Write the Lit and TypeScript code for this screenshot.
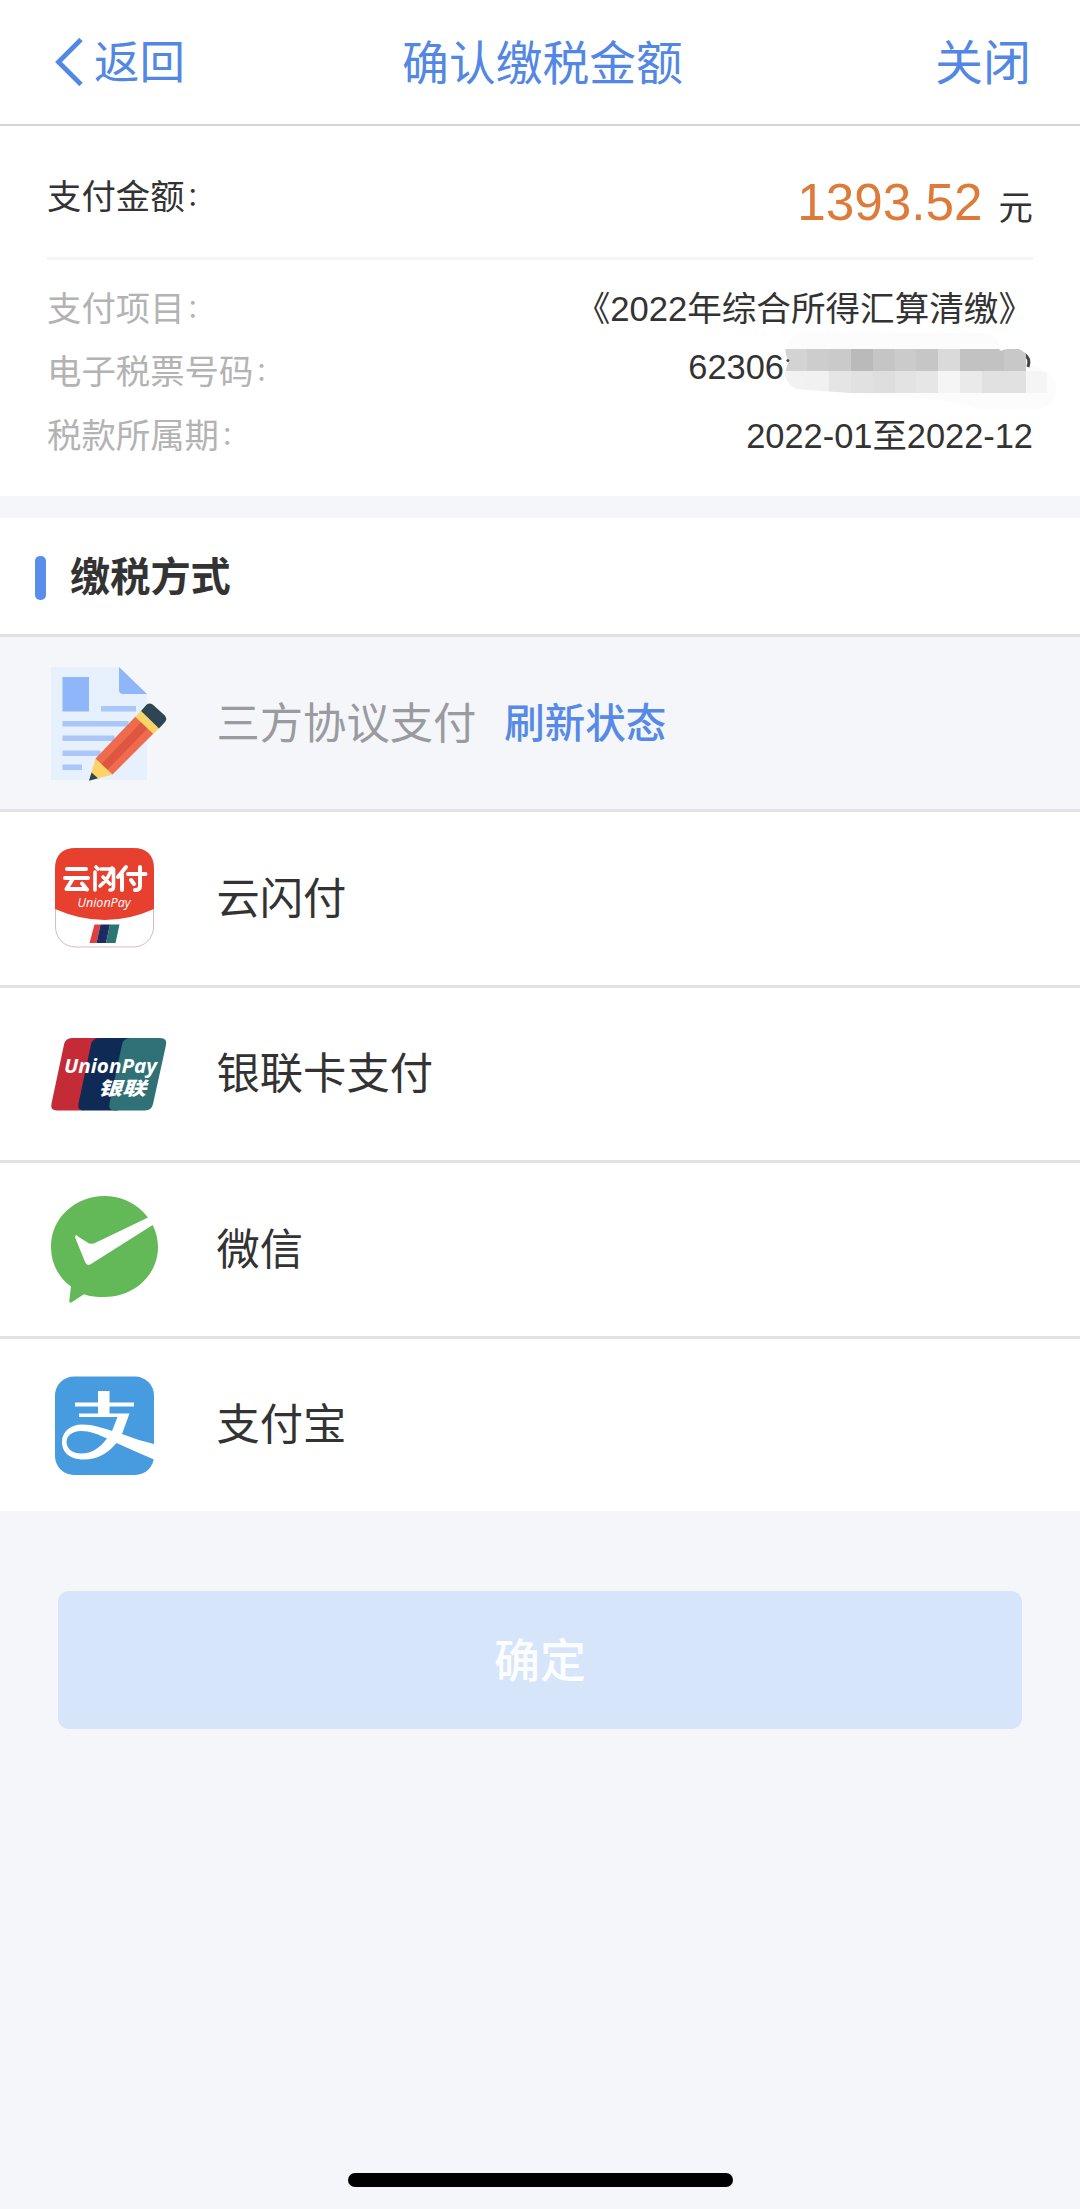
import { LitElement, html, css, svg } from "lit";
import { customElement } from "lit/decorators.js";

const documentIcon = html`<svg viewBox="30 643 160 160">
  <path d="M51 667H119L147 694V780H51Z" fill="#e6f1fd"/>
  <path d="M119 667L147 694H123Q119 694 119 690Z" fill="#8fb6f9"/>
  <rect x="62.500" y="677" width="26.500" height="34.500" fill="#8fb6f9"/>
  <g fill="#abc6f8">
    <rect x="101" y="706" width="35" height="5.500"/>
    <rect x="62.500" y="721" width="66" height="5.500"/>
    <rect x="62.500" y="735.500" width="52" height="5.500"/>
    <rect x="62.500" y="750.500" width="38" height="5.500"/>
    <rect x="62.500" y="764.500" width="19.500" height="5.500"/>
  </g>
  <path d="M95.500 758.500L89 780.700L112.500 774.500Z" fill="#fbd467"/>
  <path d="M91.500 772.500L89 780.700L98 778.200Z" fill="#2f4552"/>
  <path d="M135.500 716.500L95.500 758.500L112.500 774.500L153.500 733.500Z" fill="#ee6c4d"/>
  <path d="M141.500 722L101.500 764L107.500 769.500L147.500 728.500Z" fill="#dd5641"/>
  <path d="M140.500 711L135.500 717L153.500 734L159 728.500Z" fill="#fbd467"/>
  <path d="M141 711L146.500 704.800Q149.500 702 153 704.800L164.500 715.300Q167.800 718.800 165 722L159 728.500Z" fill="#2f4552"/>
</svg>`;

const quickPassIcon = html`<svg viewBox="30 830 160 140">
  <rect x="55.500" y="849.500" width="98" height="98.500" rx="20" fill="#fff" stroke="#d9b9c2" stroke-width="1"/>
  <path d="M55 910V870Q55 849 76 849H133Q154 849 154 870V910Q105 932 55 910Z" fill="#e8402f"/>
  <g fill="none" stroke="#fff" stroke-width="4" stroke-linecap="round" stroke-linejoin="round">
    <path d="M67 870H86M65 879H88M73 879.500L66.500 890H86M82 884.500L87 890.500"/>
    <path d="M95 873V891M96 868L98 870M101 870H113.500V888Q113.500 891 110 891M112 869Q108 881 100 887M103 878L110 885" stroke-width="3.600"/>
    <path d="M126 868L118 878M122 876V891M128 875H145.500M140 868V887Q140 891 135 891M131 881L134 885"/>
  </g>
  <text x="104" y="907.500" text-anchor="middle" textLength="53" lengthAdjust="spacingAndGlyphs" font-family="Open Sans, sans-serif" font-size="13.500" font-style="italic" font-weight="500" fill="#fff">UnionPay</text>
  <path d="M94.500 925.500H100.500L96.500 944H89.500Z" fill="#e2403f"/>
  <path d="M100.500 925.500H110L106 944H96.500Z" fill="#1c2c63"/>
  <path d="M110 925.500H119.500L115.500 944H106Z" fill="#2b7672"/>
</svg>`;

const unionPayIcon = html`<svg viewBox="30 1020 160 110">
  <path d="M72 1039H100L84 1111.500H57Q50 1111.500 51.500 1104.500L64 1045.500Q65.500 1039 72 1039Z" fill="#c52b36"/>
  <path d="M99 1039H134L118 1111.500H84Q77 1111.500 78.500 1104.500L91 1045.500Q92.500 1039 99 1039Z" fill="#0f2a55"/>
  <path d="M130 1039H160Q167.500 1039 166 1046L153 1105Q151.500 1111.500 145 1111.500H115Q108 1111.500 109.500 1104.500L122 1045.500Q123.500 1039 130 1039Z" fill="#2f7176"/>
  <text x="64" y="1074" textLength="93" lengthAdjust="spacingAndGlyphs" font-family="Open Sans, sans-serif" font-size="20" font-style="italic" font-weight="700" fill="#fff">UnionPay</text>
  <text x="98" y="1096" textLength="48" lengthAdjust="spacingAndGlyphs" font-family="Noto Sans CJK SC, sans-serif" font-size="18.500" font-style="italic" font-weight="900" fill="#fff">银联</text>
</svg>`;

const wechatIcon = html`<svg viewBox="30 1180 160 140">
  <path d="M71 1287.500C58 1278 51 1264 51 1248C51 1219 75 1197 104.500 1197C134 1197 158 1220 158 1248C158 1276 134 1298 104.500 1298C97 1298 90 1297.500 84 1295.200L72 1303Q69 1305 69.300 1301.500Z" fill="#63b857"/>
  <path d="M76 1236.200L87.500 1243.500Q91 1246 96 1243.500L147 1219L156 1223L153.500 1225.500L91 1265Q87 1267.500 85.300 1263.500L75.300 1239Q74.500 1235.500 78 1236.500Z" fill="#fff"/>
  <path d="M147 1219L150 1217L162 1217V1224L153.500 1225.500Z" fill="#fff"/>
</svg>`;

const alipayIcon = html`<svg viewBox="30 1360 160 130">
  <rect x="55" y="1376.500" width="99" height="98.500" rx="19" fill="#479bdf"/>
  <path fill="#fff" d="M98 1391H109.500V1402.500H134V1406.500H109.500V1413.500H129.500L122 1434Q137 1440 154 1444V1459.500Q134 1451 116.500 1443Q103 1459.500 84 1459.500C68 1459.500 62 1451 62 1442C62 1431 71 1424.500 82 1424.500C93 1424.500 103 1428 112 1431L117.500 1417H79V1413.500H98V1406.500H75V1402.500H98Z"/>
  <path d="M107 1438.500C98 1434.500 90 1431 81 1431C72 1431 66.500 1436 66.500 1442C66.500 1449 73 1453.500 81 1453.500C92 1453.500 100 1447.500 107 1438.500Z" fill="#479bdf"/>
</svg>`;

const upper = ["#d3d3d3", "#cdcdcd", "#cacaca", "#bababa", "#c5c5c5", "#cbcbcb", "#c6c6c6", "#dadada", "#c2c2c2", "#c2c2c2", "#c8c8c8"];
const lower = ["#f2f2f2", "#f1f1f1", "#e5e5e5", "#e1e1e1", "#dedede", "#e3e3e3", "#e6e6e6", "#f5f5f5", "#eaeaea", "#e1e1e1", "#e1e1e1", "#f5f5f5"];

const methods = [
  { name: "云闪付", icon: quickPassIcon },
  { name: "银联卡支付", icon: unionPayIcon },
  { name: "微信", icon: wechatIcon },
  { name: "支付宝", icon: alipayIcon },
];

@customElement("app-root")
export class AppRoot extends LitElement {
  static styles = css`
    :host {
      display: flex;
      flex-direction: column;
      box-sizing: border-box;
      width: 1080px;
      height: 2209px;
      overflow: hidden;
      background: #f4f6fa;
      color: #333;
      font-family: "Liberation Sans", "Noto Sans CJK SC", sans-serif;
      font-size: 34.4px;
      line-height: 1;
    }
    .header {
      flex: none;
      box-sizing: border-box;
      display: grid;
      grid-template-columns: 1fr auto 1fr;
      align-items: center;
      height: 126px;
      padding: 4px 49px 0 54px;
      border-bottom: 2px solid #d4d4d6;
      background: #fff;
      color: #5387e4;
      font-size: 46.8px;
    }
    .back { display: flex; align-items: center; gap: 11px; font-size: 45.5px; }
    .back svg { width: 29px; height: 48px; margin-top: -4px; }
    .close { justify-self: end; font-size: 48px; }
    .summary {
      flex: none;
      box-sizing: border-box;
      height: 370px;
      padding: 0 47px;
      background: #fff;
    }
    .amount {
      display: flex;
      justify-content: space-between;
      box-sizing: border-box;
      height: 134px;
      padding-top: 53px;
      border-bottom: 3px solid #f5f5f6;
    }
    .label { line-height: 36px; }
    .value { display: flex; align-items: baseline; gap: 16px; line-height: 48px; }
    .sum { color: #dd7b3b; font-size: 51.3px; }
    .colon { position: relative; top: -4px; margin-left: 2px; font-size: 25px; }
    .details { display: grid; padding-top: 18px; }
    .line { display: flex; justify-content: space-between; height: 63.4px; line-height: 63.4px; }
    .line .label { color: #b3b3b3; line-height: inherit; }
    .project { font-size: 34.6px; }
    .number { display: flex; line-height: 52px; }
    .mosaic { width: 265px; height: 53.2px; margin: 1px -16px 0 0; overflow: visible; }
    .methods { flex: none; margin-top: 22px; background: #fff; }
    .heading {
      box-sizing: border-box;
      display: flex;
      align-items: center;
      gap: 24px;
      height: 119px;
      padding: 3px 35px 0;
      border-bottom: 3px solid #e1e2e5;
      font-size: 40.2px;
      font-weight: 700;
    }
    .heading span { padding-top: 1px; }
    .mark { width: 11px; height: 44px; border-radius: 5px; background: #5a8eea; }
    .method {
      box-sizing: border-box;
      display: flex;
      align-items: center;
      height: 175.4px;
      padding-left: 30px;
      border-bottom: 3px solid #e1e2e5;
      font-size: 43.3px;
    }
    .name, .refresh { padding-top: 2px; }
    .method:last-child { height: 172.4px; border-bottom: 0; }
    .disabled { background: #f4f6fa; color: #999b9f; }
    .icon { display: flex; width: 160px; margin-right: 26.5px; }
    .icon svg { width: 160px; flex: none; }
    .refresh { margin-left: 28px; color: #568ae6; font-size: 40.5px; font-weight: 500; }
    .confirm {
      flex: none;
      display: flex;
      align-items: center;
      justify-content: center;
      box-sizing: border-box;
      height: 138px;
      margin: 80px 58px 0;
      padding-top: 2px;
      border-radius: 11px;
      background: #d7e5fa;
      color: #fbfdff;
      font-size: 46px;
      font-weight: 500;
    }
    .home { flex: none; width: 385px; height: 14px; margin: auto auto 22px; border-radius: 7px; background: #000; }
  `;

  private label(text: string) {
    return html`<span class="label">${text}<span class="colon">：</span></span>`;
  }

  private mosaic() {
    return html`<svg class="mosaic" viewBox="784 342 265 53.2">
      <path d="M786 349Q790 332 806 332L990 333Q998 336 1000 349L1047 372Q1057 378 1057 392Q1054 409 1034 409H980L940 400L850 393Z" fill="#fcfcfc"/>
      <path d="M1024 354Q1031 358 1028 367" fill="none" stroke="#444" stroke-width="3"/>
      <circle cx="788" cy="360.500" r="1.500" fill="#444"/>
      <clipPath id="blob"><path d="M785 349H999L1001 351Q1004 349 1008 349H1019Q1022 350 1026 354V366L1047 373V393H850L800 389.500Q787 388 785 373L788 363Z"/></clipPath>
      <g clip-path="url(#blob)" shape-rendering="crispEdges">
        ${upper.map((c, i) => svg`<rect x=${785.3 + i * 21.84} y="349" width="22" height="22" fill=${c}/>`)}
        ${lower.map((c, i) => svg`<rect x=${785.3 + i * 21.84} y="371" width="22" height="22" fill=${c}/>`)}
      </g>
      <circle cx="788" cy="360.500" r="1.300" fill="#444"/>
    </svg>`;
  }

  render() {
    return html`
      <header class="header">
        <div class="back">
          <svg viewBox="0 0 29 48" fill="none" stroke="#5387e4" stroke-width="4.800"><path d="M27 1.500L4.500 24L27 46.500"/></svg>
          <span>返回</span>
        </div>
        <div>确认缴税金额</div>
        <div class="close">关闭</div>
      </header>
      <section class="summary">
        <div class="amount">
          ${this.label("支付金额")}
          <div class="value"><span class="sum">1393.52</span><span>元</span></div>
        </div>
        <div class="details">
          <div class="line">${this.label("支付项目")}<span class="project">《2022年综合所得汇算清缴》</span></div>
          <div class="line">${this.label("电子税票号码")}<span class="number">62306${this.mosaic()}</span></div>
          <div class="line">${this.label("税款所属期")}<span>2022-01至2022-12</span></div>
        </div>
      </section>
      <section class="methods">
        <div class="heading"><i class="mark"></i><span>缴税方式</span></div>
        <div class="method disabled">
          <span class="icon">${documentIcon}</span><span class="name">三方协议支付</span><span class="refresh">刷新状态</span>
        </div>
        ${methods.map((m) => html`<div class="method"><span class="icon">${m.icon}</span><span class="name">${m.name}</span></div>`)}
      </section>
      <div class="confirm">确定</div>
      <div class="home"></div>
    `;
  }
}
